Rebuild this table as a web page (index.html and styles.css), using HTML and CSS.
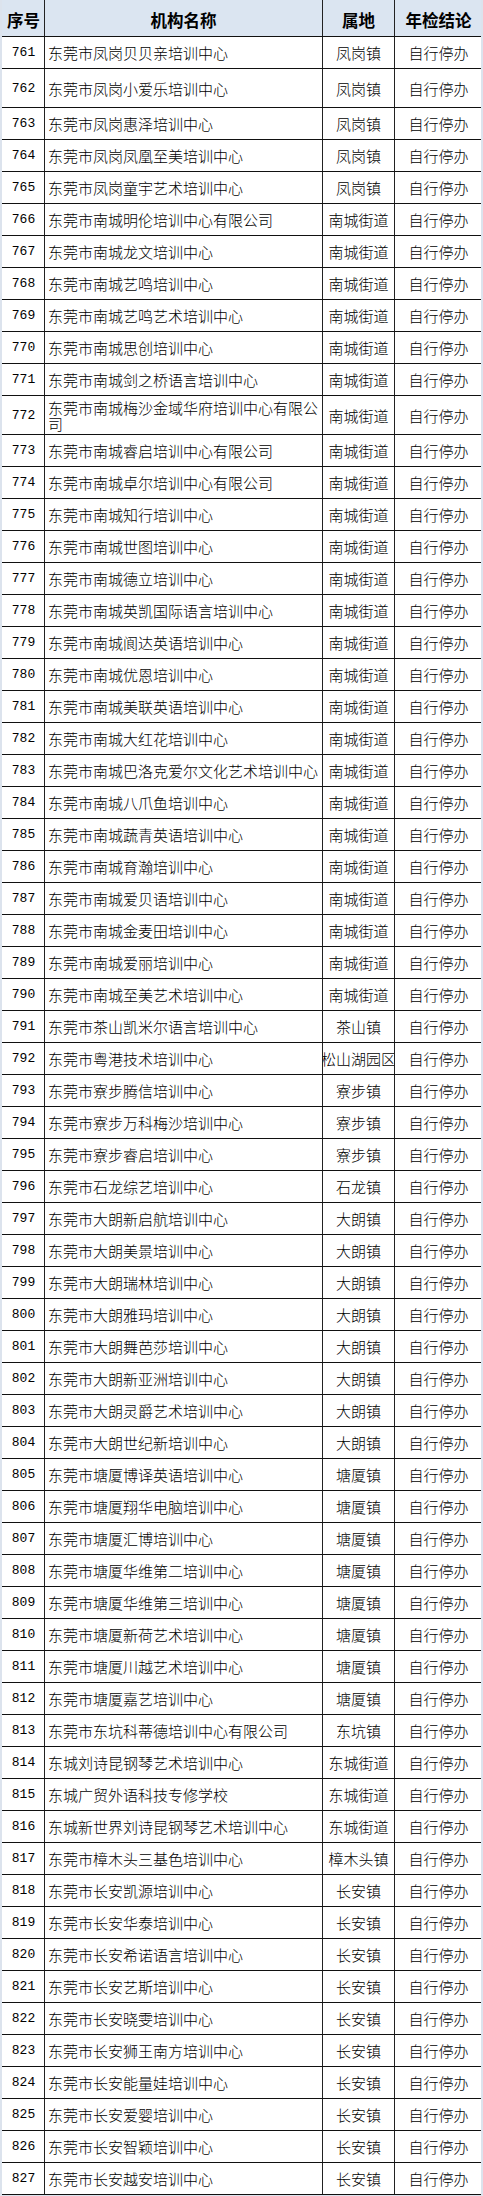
FILE: index.html
```html
<!DOCTYPE html>
<html lang="zh-CN">
<head>
<meta charset="utf-8">
<title>自行停办机构名单</title>
<link rel="stylesheet" href="styles.css">
</head>
<body>
<div class="sheet">
  <div class="row head"><div class="c n">序号</div><div class="c name hc">机构名称</div><div class="c loc">属地</div><div class="c res">年检结论</div></div>
  <div class="row"><div class="c n">761</div><div class="c name">东莞市凤岗贝贝亲培训中心</div><div class="c loc"><span>凤岗镇</span></div><div class="c res">自行停办</div></div>
  <div class="row tall"><div class="c n">762</div><div class="c name">东莞市凤岗小爱乐培训中心</div><div class="c loc"><span>凤岗镇</span></div><div class="c res">自行停办</div></div>
  <div class="row"><div class="c n">763</div><div class="c name">东莞市凤岗惠泽培训中心</div><div class="c loc"><span>凤岗镇</span></div><div class="c res">自行停办</div></div>
  <div class="row"><div class="c n">764</div><div class="c name">东莞市凤岗凤凰至美培训中心</div><div class="c loc"><span>凤岗镇</span></div><div class="c res">自行停办</div></div>
  <div class="row"><div class="c n">765</div><div class="c name">东莞市凤岗童宇艺术培训中心</div><div class="c loc"><span>凤岗镇</span></div><div class="c res">自行停办</div></div>
  <div class="row"><div class="c n">766</div><div class="c name">东莞市南城明伦培训中心有限公司</div><div class="c loc"><span>南城街道</span></div><div class="c res">自行停办</div></div>
  <div class="row"><div class="c n">767</div><div class="c name">东莞市南城龙文培训中心</div><div class="c loc"><span>南城街道</span></div><div class="c res">自行停办</div></div>
  <div class="row"><div class="c n">768</div><div class="c name">东莞市南城艺鸣培训中心</div><div class="c loc"><span>南城街道</span></div><div class="c res">自行停办</div></div>
  <div class="row"><div class="c n">769</div><div class="c name">东莞市南城艺鸣艺术培训中心</div><div class="c loc"><span>南城街道</span></div><div class="c res">自行停办</div></div>
  <div class="row"><div class="c n">770</div><div class="c name">东莞市南城思创培训中心</div><div class="c loc"><span>南城街道</span></div><div class="c res">自行停办</div></div>
  <div class="row"><div class="c n">771</div><div class="c name">东莞市南城剑之桥语言培训中心</div><div class="c loc"><span>南城街道</span></div><div class="c res">自行停办</div></div>
  <div class="row tall"><div class="c n">772</div><div class="c name">东莞市南城梅沙金域华府培训中心有限公司</div><div class="c loc"><span>南城街道</span></div><div class="c res">自行停办</div></div>
  <div class="row"><div class="c n">773</div><div class="c name">东莞市南城睿启培训中心有限公司</div><div class="c loc"><span>南城街道</span></div><div class="c res">自行停办</div></div>
  <div class="row"><div class="c n">774</div><div class="c name">东莞市南城卓尔培训中心有限公司</div><div class="c loc"><span>南城街道</span></div><div class="c res">自行停办</div></div>
  <div class="row"><div class="c n">775</div><div class="c name">东莞市南城知行培训中心</div><div class="c loc"><span>南城街道</span></div><div class="c res">自行停办</div></div>
  <div class="row"><div class="c n">776</div><div class="c name">东莞市南城世图培训中心</div><div class="c loc"><span>南城街道</span></div><div class="c res">自行停办</div></div>
  <div class="row"><div class="c n">777</div><div class="c name">东莞市南城德立培训中心</div><div class="c loc"><span>南城街道</span></div><div class="c res">自行停办</div></div>
  <div class="row"><div class="c n">778</div><div class="c name">东莞市南城英凯国际语言培训中心</div><div class="c loc"><span>南城街道</span></div><div class="c res">自行停办</div></div>
  <div class="row"><div class="c n">779</div><div class="c name">东莞市南城阆达英语培训中心</div><div class="c loc"><span>南城街道</span></div><div class="c res">自行停办</div></div>
  <div class="row"><div class="c n">780</div><div class="c name">东莞市南城优恩培训中心</div><div class="c loc"><span>南城街道</span></div><div class="c res">自行停办</div></div>
  <div class="row"><div class="c n">781</div><div class="c name">东莞市南城美联英语培训中心</div><div class="c loc"><span>南城街道</span></div><div class="c res">自行停办</div></div>
  <div class="row"><div class="c n">782</div><div class="c name">东莞市南城大红花培训中心</div><div class="c loc"><span>南城街道</span></div><div class="c res">自行停办</div></div>
  <div class="row"><div class="c n">783</div><div class="c name">东莞市南城巴洛克爱尔文化艺术培训中心</div><div class="c loc"><span>南城街道</span></div><div class="c res">自行停办</div></div>
  <div class="row"><div class="c n">784</div><div class="c name">东莞市南城八爪鱼培训中心</div><div class="c loc"><span>南城街道</span></div><div class="c res">自行停办</div></div>
  <div class="row"><div class="c n">785</div><div class="c name">东莞市南城蔬青英语培训中心</div><div class="c loc"><span>南城街道</span></div><div class="c res">自行停办</div></div>
  <div class="row"><div class="c n">786</div><div class="c name">东莞市南城育瀚培训中心</div><div class="c loc"><span>南城街道</span></div><div class="c res">自行停办</div></div>
  <div class="row"><div class="c n">787</div><div class="c name">东莞市南城爱贝语培训中心</div><div class="c loc"><span>南城街道</span></div><div class="c res">自行停办</div></div>
  <div class="row"><div class="c n">788</div><div class="c name">东莞市南城金麦田培训中心</div><div class="c loc"><span>南城街道</span></div><div class="c res">自行停办</div></div>
  <div class="row"><div class="c n">789</div><div class="c name">东莞市南城爱丽培训中心</div><div class="c loc"><span>南城街道</span></div><div class="c res">自行停办</div></div>
  <div class="row"><div class="c n">790</div><div class="c name">东莞市南城至美艺术培训中心</div><div class="c loc"><span>南城街道</span></div><div class="c res">自行停办</div></div>
  <div class="row"><div class="c n">791</div><div class="c name">东莞市茶山凯米尔语言培训中心</div><div class="c loc"><span>茶山镇</span></div><div class="c res">自行停办</div></div>
  <div class="row"><div class="c n">792</div><div class="c name">东莞市粤港技术培训中心</div><div class="c loc"><span>松山湖园区</span></div><div class="c res">自行停办</div></div>
  <div class="row"><div class="c n">793</div><div class="c name">东莞市寮步腾信培训中心</div><div class="c loc"><span>寮步镇</span></div><div class="c res">自行停办</div></div>
  <div class="row"><div class="c n">794</div><div class="c name">东莞市寮步万科梅沙培训中心</div><div class="c loc"><span>寮步镇</span></div><div class="c res">自行停办</div></div>
  <div class="row"><div class="c n">795</div><div class="c name">东莞市寮步睿启培训中心</div><div class="c loc"><span>寮步镇</span></div><div class="c res">自行停办</div></div>
  <div class="row"><div class="c n">796</div><div class="c name">东莞市石龙综艺培训中心</div><div class="c loc"><span>石龙镇</span></div><div class="c res">自行停办</div></div>
  <div class="row"><div class="c n">797</div><div class="c name">东莞市大朗新启航培训中心</div><div class="c loc"><span>大朗镇</span></div><div class="c res">自行停办</div></div>
  <div class="row"><div class="c n">798</div><div class="c name">东莞市大朗美景培训中心</div><div class="c loc"><span>大朗镇</span></div><div class="c res">自行停办</div></div>
  <div class="row"><div class="c n">799</div><div class="c name">东莞市大朗瑞林培训中心</div><div class="c loc"><span>大朗镇</span></div><div class="c res">自行停办</div></div>
  <div class="row"><div class="c n">800</div><div class="c name">东莞市大朗雅玛培训中心</div><div class="c loc"><span>大朗镇</span></div><div class="c res">自行停办</div></div>
  <div class="row"><div class="c n">801</div><div class="c name">东莞市大朗舞芭莎培训中心</div><div class="c loc"><span>大朗镇</span></div><div class="c res">自行停办</div></div>
  <div class="row"><div class="c n">802</div><div class="c name">东莞市大朗新亚洲培训中心</div><div class="c loc"><span>大朗镇</span></div><div class="c res">自行停办</div></div>
  <div class="row"><div class="c n">803</div><div class="c name">东莞市大朗灵爵艺术培训中心</div><div class="c loc"><span>大朗镇</span></div><div class="c res">自行停办</div></div>
  <div class="row"><div class="c n">804</div><div class="c name">东莞市大朗世纪新培训中心</div><div class="c loc"><span>大朗镇</span></div><div class="c res">自行停办</div></div>
  <div class="row"><div class="c n">805</div><div class="c name">东莞市塘厦博译英语培训中心</div><div class="c loc"><span>塘厦镇</span></div><div class="c res">自行停办</div></div>
  <div class="row"><div class="c n">806</div><div class="c name">东莞市塘厦翔华电脑培训中心</div><div class="c loc"><span>塘厦镇</span></div><div class="c res">自行停办</div></div>
  <div class="row"><div class="c n">807</div><div class="c name">东莞市塘厦汇博培训中心</div><div class="c loc"><span>塘厦镇</span></div><div class="c res">自行停办</div></div>
  <div class="row"><div class="c n">808</div><div class="c name">东莞市塘厦华维第二培训中心</div><div class="c loc"><span>塘厦镇</span></div><div class="c res">自行停办</div></div>
  <div class="row"><div class="c n">809</div><div class="c name">东莞市塘厦华维第三培训中心</div><div class="c loc"><span>塘厦镇</span></div><div class="c res">自行停办</div></div>
  <div class="row"><div class="c n">810</div><div class="c name">东莞市塘厦新荷艺术培训中心</div><div class="c loc"><span>塘厦镇</span></div><div class="c res">自行停办</div></div>
  <div class="row"><div class="c n">811</div><div class="c name">东莞市塘厦川越艺术培训中心</div><div class="c loc"><span>塘厦镇</span></div><div class="c res">自行停办</div></div>
  <div class="row"><div class="c n">812</div><div class="c name">东莞市塘厦嘉艺培训中心</div><div class="c loc"><span>塘厦镇</span></div><div class="c res">自行停办</div></div>
  <div class="row"><div class="c n">813</div><div class="c name">东莞市东坑科蒂德培训中心有限公司</div><div class="c loc"><span>东坑镇</span></div><div class="c res">自行停办</div></div>
  <div class="row"><div class="c n">814</div><div class="c name">东城刘诗昆钢琴艺术培训中心</div><div class="c loc"><span>东城街道</span></div><div class="c res">自行停办</div></div>
  <div class="row"><div class="c n">815</div><div class="c name">东城广贸外语科技专修学校</div><div class="c loc"><span>东城街道</span></div><div class="c res">自行停办</div></div>
  <div class="row"><div class="c n">816</div><div class="c name">东城新世界刘诗昆钢琴艺术培训中心</div><div class="c loc"><span>东城街道</span></div><div class="c res">自行停办</div></div>
  <div class="row"><div class="c n">817</div><div class="c name">东莞市樟木头三基色培训中心</div><div class="c loc"><span>樟木头镇</span></div><div class="c res">自行停办</div></div>
  <div class="row"><div class="c n">818</div><div class="c name">东莞市长安凯源培训中心</div><div class="c loc"><span>长安镇</span></div><div class="c res">自行停办</div></div>
  <div class="row"><div class="c n">819</div><div class="c name">东莞市长安华泰培训中心</div><div class="c loc"><span>长安镇</span></div><div class="c res">自行停办</div></div>
  <div class="row"><div class="c n">820</div><div class="c name">东莞市长安希诺语言培训中心</div><div class="c loc"><span>长安镇</span></div><div class="c res">自行停办</div></div>
  <div class="row"><div class="c n">821</div><div class="c name">东莞市长安艺斯培训中心</div><div class="c loc"><span>长安镇</span></div><div class="c res">自行停办</div></div>
  <div class="row"><div class="c n">822</div><div class="c name">东莞市长安晓雯培训中心</div><div class="c loc"><span>长安镇</span></div><div class="c res">自行停办</div></div>
  <div class="row"><div class="c n">823</div><div class="c name">东莞市长安狮王南方培训中心</div><div class="c loc"><span>长安镇</span></div><div class="c res">自行停办</div></div>
  <div class="row"><div class="c n">824</div><div class="c name">东莞市长安能量娃培训中心</div><div class="c loc"><span>长安镇</span></div><div class="c res">自行停办</div></div>
  <div class="row"><div class="c n">825</div><div class="c name">东莞市长安爱婴培训中心</div><div class="c loc"><span>长安镇</span></div><div class="c res">自行停办</div></div>
  <div class="row"><div class="c n">826</div><div class="c name">东莞市长安智颖培训中心</div><div class="c loc"><span>长安镇</span></div><div class="c res">自行停办</div></div>
  <div class="row"><div class="c n">827</div><div class="c name">东莞市长安越安培训中心</div><div class="c loc"><span>长安镇</span></div><div class="c res">自行停办</div></div>
</div>
</body>
</html>
```

FILE: styles.css
```css
html, body {
  margin: 0;
  padding: 0;
}
body {
  background: #dce3ed;
  width: 483px;
  height: 2196px;
  overflow: hidden;
  font-family: "Noto Sans CJK SC", "Noto Sans", sans-serif;
  font-weight: 300;
  color: #000;
}
.sheet {
  margin: 0 2px;
  background: #fff;
}
.row {
  display: grid;
  grid-template-columns: 42px 278px 72px 1fr;
  height: 32px;
  box-sizing: border-box;
  border-bottom: 1px solid #111;
}
.row.tall {
  height: 39px;
}
.row.head {
  height: 37px;
  background: #dbe5f1;
  font-weight: bold;
}
.c {
  display: flex;
  align-items: center;
  justify-content: center;
  overflow: hidden;
  white-space: nowrap;
  font-size: 15px;
  line-height: 16px;
  padding-top: 1px;
  box-sizing: border-box;
}
.row.head .c {
  font-size: 16.5px;
  padding-top: 3px;
}
.c + .c {
  border-left: 1px solid #222;
}
.n {
  font-family: "Liberation Mono", monospace;
  font-weight: normal;
  font-size: 13px;
  padding-left: 1px;
}
.row.head .n {
  font-family: "Noto Sans CJK SC", sans-serif;
  font-weight: bold;
}
.name {
  justify-content: flex-start;
  padding-left: 3px;
  white-space: normal;
  line-break: anywhere;
}
.name.hc {
  justify-content: center;
  padding-left: 0;
}
.loc span {
  flex: none;
}
.res {
  padding-left: 1px;
}
```
